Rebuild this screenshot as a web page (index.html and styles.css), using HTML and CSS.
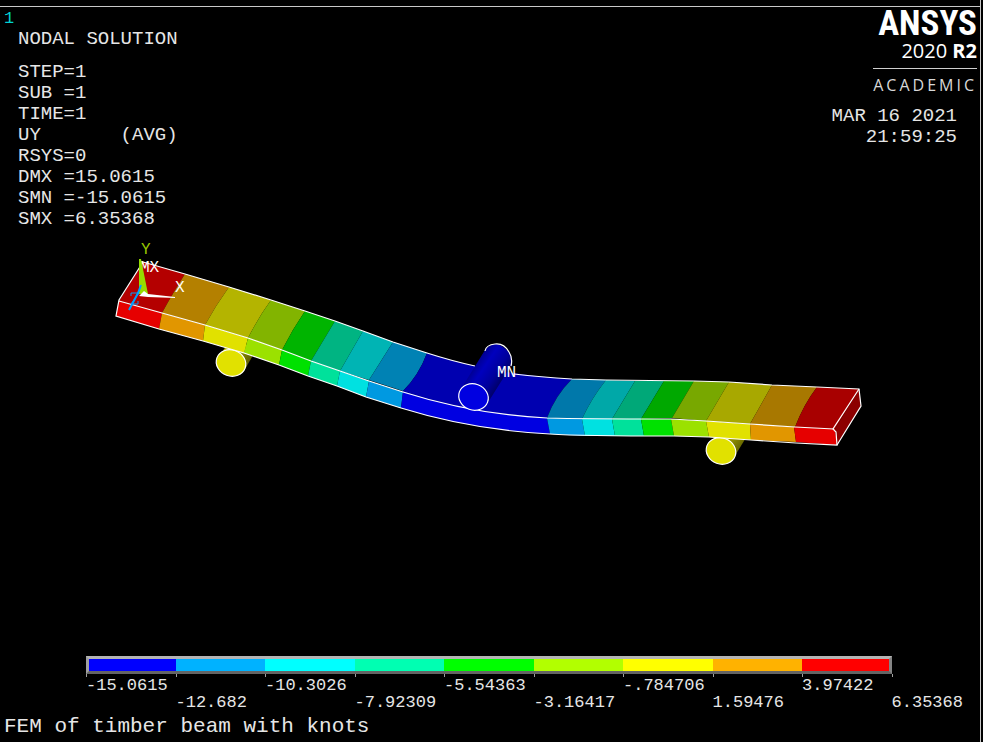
FILE: index.html
```html
<!DOCTYPE html>
<html lang="en">
<head>
<meta charset="utf-8">
<meta name="viewport" content="width=device-width, initial-scale=1">
<title>FEM of timber beam with knots</title>
<link rel="stylesheet" href="styles.css">
</head>
<body>
<main class="screen">
  <header class="top">
    <section class="readout">
      <p class="window-no">1</p>
      <h1 class="heading">NODAL SOLUTION</h1>
      <pre class="values">STEP=1
SUB =1
TIME=1
UY       (AVG)
RSYS=0
DMX =15.0615
SMN =-15.0615
SMX =6.35368</pre>
    </section>
    <section class="info">
      <div class="brand">
        <p class="name">ANSYS</p>
        <p class="release">2020 <b>R2</b></p>
        <p class="licence">ACADEMIC</p>
      </div>
      <p class="date">MAR 16 2021<br>21:59:25</p>
    </section>
  </header>

  <svg class="plot" viewBox="0 234 980 416" preserveAspectRatio="xMidYMin meet" role="img" aria-label="Deflected beam on two supports">
    <defs>
      <linearGradient id="roller" gradientUnits="userSpaceOnUse" x1="472" y1="368" x2="499" y2="386">
        <stop offset="0" stop-color="#00008c"/><stop offset=".3" stop-color="#0000be"/>
        <stop offset=".7" stop-color="#00009c"/><stop offset="1" stop-color="#000068"/>
      </linearGradient>
      <linearGradient id="support" x1="0" y1="0" x2="1" y2=".7">
        <stop offset=".3" stop-color="#b4b400"/><stop offset="1" stop-color="#4c4c00"/>
      </linearGradient>
    </defs>

    <!-- supports -->
    <path fill="url(#support)" d="M222 352 L232 338 L256 350 L244 371Z"/>
    <path fill="url(#support)" d="M712 440 L722 430 L747 436 L733 459Z"/>
    <ellipse class="edge" cx="231" cy="363" rx="15" ry="13" transform="rotate(20 231 363)" fill="#e1e100"/>
    <ellipse class="edge" cx="721" cy="451" rx="15" ry="13" transform="rotate(20 721 451)" fill="#e1e100"/>

    <!-- top face bands -->
    <path fill="#b40000" d="M143 262 L185 274 Q174 291 162 313 L119 301Z"/>
    <path fill="#b48000" d="M185 274 L229 287 Q216 305 205 325 L162 313 Q174 291 185 274Z"/>
    <path fill="#b4b400" d="M229 287 L271 300 Q258 318 248 338 L205 325 Q216 305 229 287Z"/>
    <path fill="#82b400" d="M271 300 L305 311 Q292 330 282 350 L248 338 Q258 318 271 300Z"/>
    <path fill="#00b400" d="M305 311 L335 321 L311 361 L282 350 Q292 330 305 311Z"/>
    <path fill="#00b482" d="M335 321 L363 331 L340 371 L311 361Z"/>
    <path fill="#00b4b4" d="M363 331 L393 342 L369 380 L340 371Z"/>
    <path fill="#0082b4" d="M393 342 L427 353 Q419 375 403 391 L369 380Z"/>
    <path fill="#0000b0" d="M427 353 Q452 361 475 366 Q515 375 572 379 Q555 396 547 418 Q472 414 403 391 Q419 375 427 353Z"/>
    <path fill="#0078aa" d="M572 379 L606 380 Q591 399 582 419 L547 418 Q555 396 572 379Z"/>
    <path fill="#00a8a8" d="M606 380 L635 381 L612 419 L582 419 Q591 399 606 380Z"/>
    <path fill="#00a878" d="M635 381 L664 381 L641 419 L612 419Z"/>
    <path fill="#00a800" d="M664 381 L694 381 L672 418 L641 419Z"/>
    <path fill="#78a800" d="M694 381 L729 382 L706 421 L672 418Z"/>
    <path fill="#a8a800" d="M729 382 L772 385 L750 424 L706 421Z"/>
    <path fill="#a87800" d="M772 385 L817 387 Q804 404 795 427 L750 424Z"/>
    <path fill="#a80000" d="M817 387 L859 389 L835 429 L795 427 Q804 404 817 387Z"/>

    <!-- front face bands -->
    <path fill="#e60000" d="M119 301 L162 313 L159 329 L116 316Z"/>
    <path fill="#e19600" d="M162 313 L205 325 L203 341 L159 329Z"/>
    <path fill="#e1e100" d="M205 325 L248 338 L244 353 L203 341Z"/>
    <path fill="#9be100" d="M248 338 L282 350 L279 365 L244 353Z"/>
    <path fill="#00e100" d="M282 350 L311 361 L308 376 L279 365Z"/>
    <path fill="#00e19b" d="M311 361 L340 371 L337 386 L308 376Z"/>
    <path fill="#00e1e1" d="M340 371 L369 381 L366 397 L337 386Z"/>
    <path fill="#0099e1" d="M369 381 L403 392 L401 408 L366 397Z"/>
    <path fill="#0000e1" d="M403 391 Q472 414 547 418 L550 434 Q472 430 401 408Z"/>
    <path fill="#0099e1" d="M547 418 L582 419 L585 436 L550 434Z"/>
    <path fill="#00e1e1" d="M582 419 L612 419 L615 436 L585 436Z"/>
    <path fill="#00e19b" d="M612 419 L641 419 L644 436 L615 436Z"/>
    <path fill="#00e100" d="M641 419 L671 419 L674 436 L644 436Z"/>
    <path fill="#9be100" d="M671 419 L706 421 L709 437 L674 436Z"/>
    <path fill="#e1e100" d="M706 421 L750 424 L751 440 L709 437Z"/>
    <path fill="#e19600" d="M750 424 L794 427 L796 442 L751 440Z"/>
    <path fill="#e60000" d="M794 427 L835 429 L837 445 L796 442Z"/>
    <path fill="#8c0000" d="M859 389 L861 406 L837 445 L835 429Z"/>

    <!-- outline -->
    <path class="edge line" d="M143 262 L185 274 L229 287 L271 300 L305 311 L335 321 L363 331 L393 342 L427 353 Q452 361 475 366"/>
    <path class="edge line" d="M514 374 Q540 377 572 379 L606 380 L694 381 L729 382 L772 385 L817 387 L859 389 L861 406 L837 445"/>
    <path class="edge line" d="M143 262 L119 300 L116 316 L159 329 L203 341 L244 353 L279 365 L308 376 L337 386 L366 397 L401 408 Q472 430 550 434 Q580 436 674 436 L709 437 L751 440 L796 443 L837 445 L836 432 L833 429 L859 389"/>
    <path class="edge line" d="M119 301 L162 313 L205 325 L248 338 L282 350 L311 361 L340 371 L369 381 L403 392 Q472 414 547 418 Q580 419 671 419 L706 421 L750 424 L795 427 L834 429"/>

    <!-- loading roller -->
    <path fill="url(#roller)" d="M461 389 L485 350 Q494 340 503 347 Q513 353 512 364 L487 404Z"/>
    <path class="edge line" d="M485 351 Q486 345 495 344 Q504 343 509 352 Q513 358 511 366"/>
    <ellipse class="edge" cx="473.5" cy="397" rx="15" ry="13" transform="rotate(20 473.5 397)" fill="#0000e1"/>

    <!-- axes and extremes -->
    <text class="mark" x="140" y="272">MX</text>
    <path fill="#96dc00" d="M139 259 L141 259 L148 294 L139 294Z"/>
    <path fill="#fff" d="M139 296 L144 291 L148 294 L175 297 L175 298 L148 297Z"/>
    <path fill="none" stroke="#00a0ff" stroke-width="2" d="M141 285 L138 293 L129 310"/>
    <path fill="none" stroke="#00a0ff" d="M131 296 V293 H139 L131 304 H138 V301"/>
    <text class="axis-y" x="141" y="254">Y</text>
    <text class="mark" x="175" y="292">X</text>
    <text class="mark" x="497" y="377">MN</text>
  </svg>

  <section class="legend" aria-label="Displacement scale">
    <div class="bar">
      <i class="c1"></i><i class="c2"></i><i class="c3"></i><i class="c4"></i><i class="c5"></i><i class="c6"></i><i class="c7"></i><i class="c8"></i><i class="c9"></i>
    </div>
    <ol class="scale">
      <li>-15.0615</li><li>-12.682</li><li>-10.3026</li><li>-7.92309</li><li>-5.54363</li><li>-3.16417</li><li>-.784706</li><li>1.59476</li><li>3.97422</li><li>6.35368</li>
    </ol>
  </section>
  <p class="caption">FEM of timber beam with knots</p>
</main>
</body>
</html>
```
FILE: styles.css
```css
* { box-sizing: border-box; }

body {
  margin: 0;
  background: #000;
  color: #e6e6e6;
  font-family: "Liberation Mono", "Courier New", monospace;
}

p, h1, pre, ol { margin: 0; padding: 0; font: inherit; }

.screen {
  display: flex;
  flex-direction: column;
  height: 100vh;
  min-height: 600px;
  margin-right: 2px;
  padding-top: 6px;
  overflow: hidden;
  border-right: 1px solid #c8c8c8;
  background: linear-gradient(#c8c8c8, #c8c8c8) 0 6px / 100% 1px no-repeat;
}

.top {
  display: flex;
  justify-content: space-between;
  flex: none;
  padding-bottom: 4px;
}

.readout {
  padding: 2px 0 0 18px;
  font-size: 19px;
  line-height: 21px;
}

.window-no {
  margin-left: -14px;
  color: #00d2d2;
  font-size: 17px;
}

.heading { margin-bottom: 12px; }

.info {
  display: flex;
  flex-direction: column;
  align-items: flex-end;
}

.brand {
  padding: 2px 3px 0 0;
  color: #fff;
  font-family: "Open Sans", sans-serif;
  text-align: right;
}

.name {
  font-family: "Roboto Condensed", "Open Sans", sans-serif;
  font-size: 35px;
  font-weight: 700;
  line-height: 32px;
}

.release {
  padding-bottom: 6px;
  font-size: 20px;
  line-height: 22px;
}

.licence {
  padding-top: 5px;
  border-top: 1px solid #d0d0d0;
  color: #d8d8d8;
  font-size: 16px;
  letter-spacing: 3px;
  line-height: 22px;
}

.date {
  padding: 10px 23px 0 0;
  font-size: 19px;
  line-height: 21px;
  text-align: right;
}

.plot {
  display: block;
  flex: 1 1 0;
  width: 100%;
  min-height: 0;
}

.edge { stroke: #fff; stroke-width: 1.2; }
.line { fill: none; }

.mark, .axis-y { fill: #fff; font-size: 16px; }
.axis-y { fill: #96c800; }

.legend {
  flex: none;
  width: 82.2%;
  margin-left: 86px;
}

.bar {
  position: relative;
  display: grid;
  grid-template-columns: repeat(9, 1fr);
  height: 18px;
}

.bar::after {
  content: "";
  position: absolute;
  inset: 0;
  border: 3px solid;
  border-color: #b4b4b4 #848484 #646464 #a0a0a0;
}

.c1 { background: #0000ff; }
.c2 { background: #00b2ff; }
.c3 { background: #00ffff; }
.c4 { background: #00ffb2; }
.c5 { background: #00ff00; }
.c6 { background: #b2ff00; }
.c7 { background: #ffff00; }
.c8 { background: #ffb200; }
.c9 { background: #ff0000; }

.scale {
  display: grid;
  grid-template-columns: repeat(10, 1fr);
  width: calc(100% * 10 / 9);
  font-size: 17px;
  line-height: 17px;
  list-style: none;
}

.scale li::before {
  content: "";
  display: block;
  width: 1px;
  height: 3px;
  background: #a0a0a0;
}

.scale li:nth-child(even)::before { margin-bottom: 17px; }

.caption {
  flex: none;
  padding: 5px 0 4px 4px;
  font-size: 21px;
  line-height: 22px;
}
```
